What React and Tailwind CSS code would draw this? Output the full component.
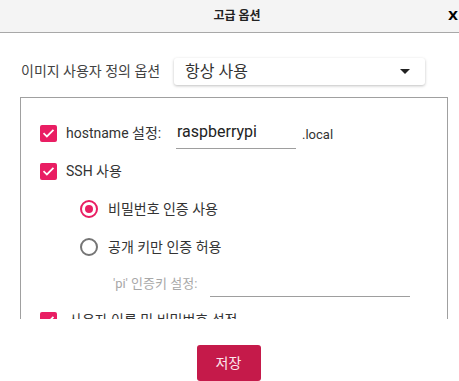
import React from "react";

const FONT = "font-['Roboto','Noto_Sans_CJK_KR',sans-serif]";

function Check({ className = "" }) {
  return (
    <span
      className={`w-[17px] h-[17px] rounded-[2px] bg-[#e91e63] flex items-center justify-center shrink-0 ${className}`}
    >
      <svg width="13" height="13" viewBox="0 0 24 24">
        <path
          d="M4 12.5l5 5L20 6.5"
          fill="none"
          stroke="white"
          strokeWidth="3.2"
          strokeLinecap="square"
        />
      </svg>
    </span>
  );
}

function Radio({ checked }) {
  return (
    <span
      className={`w-[18px] h-[18px] rounded-full border-2 flex items-center justify-center shrink-0 ${
        checked ? "border-[#e91e63]" : "border-[#757575]"
      }`}
    >
      {checked && <span className="w-[8px] h-[8px] rounded-full bg-[#e91e63]" />}
    </span>
  );
}

export default function App() {
  return (
    <div className={`w-[459px] h-[381px] bg-white overflow-hidden flex flex-col ${FONT}`}>
      {/* Header */}
      <div className="h-[33px] shrink-0 bg-[#f4f4f4] border-b border-[#a8a8a8] flex items-center">
        <div className="flex-1 pl-[26px] text-center text-[12px] font-bold text-[#222]">
          고급 옵션
        </div>
        <div className="pr-[1px] text-[13px] font-bold text-black font-['DejaVu_Sans',sans-serif]">
          X
        </div>
      </div>

      {/* Image customization select */}
      <div className="flex items-center mt-[25px] pl-[21px] h-[27px]">
        <span className="w-[153px] text-[14px] text-[#424242] whitespace-nowrap">
          이미지 사용자 정의 옵션
        </span>
        <div className="w-[251px] h-[27px] rounded-[3px] bg-white shadow-[0_1px_3px_rgba(0,0,0,0.25)] flex items-center pl-[11px] pr-[15px]">
          <span className="flex-1 text-[16px] text-[#333]">항상 사용</span>
          <svg width="10" height="5" viewBox="0 0 10 5">
            <path d="M0 0h10L5 5z" fill="#222" />
          </svg>
        </div>
      </div>

      {/* Options panel */}
      <div className="mt-[12px] ml-[20px] w-[428px] h-[222px] overflow-hidden shrink-0">
        <div className="border border-[#a0a0a0] pl-[19px] pt-[16px] pb-[40px] text-[14px] text-[#333]">
          <div className="h-[38px] flex items-center">
            <Check />
            <span className="ml-[9px] w-[110px] whitespace-nowrap">hostname 설정:</span>
            <div className="w-[120px] h-[32px] border-b border-[#9e9e9e] flex items-center pl-[1px] pb-[2px] text-[16px] text-[#222]">
              raspberrypi
            </div>
            <span className="ml-[6px] mt-[3px] text-[13px] text-[#333]">.local</span>
          </div>

          <div className="h-[38px] flex items-center">
            <Check />
            <span className="ml-[9px]">SSH 사용</span>
          </div>

          <div className="h-[38px] flex items-center pl-[40px]">
            <Radio checked />
            <span className="ml-[10px]">비밀번호 인증 사용</span>
          </div>

          <div className="h-[38px] flex items-center pl-[40px]">
            <Radio />
            <span className="ml-[10px]">공개 키만 인증 허용</span>
          </div>

          <div className="h-[35px] flex items-center pl-[73px]">
            <span className="w-[97px] text-[13px] text-[#a8a8a8] whitespace-nowrap">'pi' 인증키 설정:</span>
            <div className="w-[200px] h-[27px] border-b border-[#9e9e9e]" />
          </div>

          <div className="h-[38px] flex items-center">
            <Check />
            <span className="ml-[12px]">사용자 이름 및 비밀번호 설정</span>
          </div>
        </div>
      </div>

      {/* Save */}
      <div className="flex justify-center mt-[26px] pr-[2px]">
        <button className="w-[64px] h-[36px] rounded-[3px] bg-[#c51a4a] text-[14px] text-[#fde8ee]">
          저장
        </button>
      </div>
    </div>
  );
}
